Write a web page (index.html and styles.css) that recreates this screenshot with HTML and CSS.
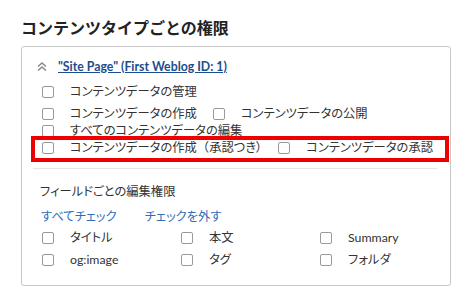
FILE: index.html
```html
<!DOCTYPE html>
<html>
    <head>
        <title>コンテンツタイプごとの権限</title>

        <link rel="stylesheet" href="styles.css">
    </head>

    <body>
        <h2 class="title">コンテンツタイプごとの権限</h2>

        <div class="perm-box">
            <div class="perm-head">
                <svg class="chevron" width="10" height="9" viewBox="0 0 10 9">
                    <polyline points="1,4.5 5,1 9,4.5" />
                    <polyline points="1,8.5 5,5 9,8.5" />
                </svg>
                <a class="site-link" href="#">"Site Page" (First Weblog ID: 1)</a>
            </div>

            <div class="perm-row row-1">
                <label class="item"><span class="box"></span>コンテンツデータの管理</label>
            </div>
            <div class="perm-row row-2">
                <label class="item"><span class="box"></span>コンテンツデータの作成</label>
                <label class="item"><span class="box"></span>コンテンツデータの公開</label>
            </div>
            <div class="perm-row row-3">
                <label class="item"><span class="box"></span>すべてのコンテンツデータの編集</label>
            </div>
            <div class="perm-row row-4">
                <label class="item"><span class="box"></span>コンテンツデータの作成<span class="paren">（</span>承認つき）</label>
                <label class="item"><span class="box"></span>コンテンツデータの承認</label>
                <div class="highlight"></div>
            </div>

            <div class="divider"></div>

            <p class="field-title">フィールドごとの編集権限</p>
            <div class="field-links">
                <a href="#">すべてチェック</a>
                <a href="#">チェックを外す</a>
            </div>

            <div class="field-grid">
                <label class="item"><span class="box"></span>タイトル</label>
                <label class="item"><span class="box"></span>本文</label>
                <label class="item"><span class="box"></span>Summary</label>
                <label class="item"><span class="box"></span>og:image</label>
                <label class="item"><span class="box"></span>タグ</label>
                <label class="item"><span class="box"></span>フォルダ</label>
            </div>
        </div>
    </body>
</html>
```

FILE: styles.css
```css
body{
    margin:0;
    padding:15px 19px 0 21px;
    background-color:white;
    color:#333;
    font-family:Lato, "Noto Sans CJK JP", sans-serif;
    font-size:12.3px;
}
.title{
    margin:0 0 7px 0;
    font-family:"Noto Sans CJK JP", sans-serif;
    font-size:16px;
    line-height:24px;
    font-weight:700;
    color:#222;
}
.perm-box{
    position:relative;
    box-sizing:border-box;
    width:430px;
    border:1px solid #c9c9c9;
    border-radius:3px;
    padding:9px 13px 14px 11px;
    box-shadow:0 1px 1px rgba(0, 0, 0, 0.08);
}
.perm-head{
    display:flex;
    align-items:center;
    height:20px;
    padding-left:4px;
    margin-bottom:4px;
}
.chevron{
    fill:none;
    stroke:#8a8a8a;
    stroke-width:1.5;
    margin-right:11px;
}
.site-link{
    color:#1d4d8e;
    font-weight:700;
    font-size:12.3px;
    text-decoration:underline;
}
.perm-row{
    display:flex;
    align-items:center;
    padding-left:9px;
    font-feature-settings:"palt";
}
.row-1{
    height:23px;
}
.row-2{
    height:22px;
}
.row-3{
    height:12px;
}
.row-4{
    position:relative;
    height:22px;
}
.paren{
    font-feature-settings:normal;
}
.item{
    display:inline-flex;
    align-items:center;
    margin-right:16px;
    white-space:nowrap;
    line-height:16px;
}
.box{
    display:inline-block;
    box-sizing:border-box;
    width:12px;
    height:12px;
    border:1px solid #9a9a9a;
    border-radius:2px;
    background-color:white;
    margin-right:16px;
}
.highlight{
    position:absolute;
    left:-2px;
    right:-12px;
    top:-1px;
    bottom:-3px;
    border:4px solid #ee0000;
}
.divider{
    height:1px;
    background-color:#e6e6e6;
    margin-top:9px;
}
.field-title{
    margin:13px 0 0 0;
    padding-left:7px;
    line-height:20px;
    font-feature-settings:"palt";
}
.field-links{
    display:flex;
    gap:28px;
    margin-top:5px;
    padding-left:8px;
    line-height:20px;
    font-feature-settings:"palt";
}
.field-links a{
    color:#2f6db8;
    text-decoration:none;
}
.field-grid{
    display:grid;
    grid-template-columns:repeat(3, 139px);
    grid-auto-rows:22px;
    align-items:center;
    padding-left:9px;
    font-feature-settings:"palt";
}
```
